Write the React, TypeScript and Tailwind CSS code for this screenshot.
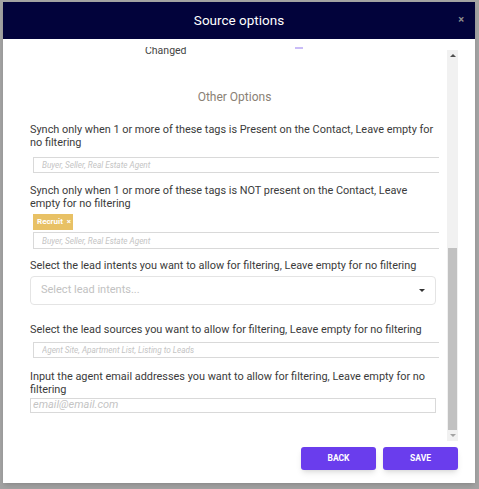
import { useState } from 'react'

const labelCls = 'text-[10.9px] leading-[13px] text-[#3b3b3b]'
const smallInput =
  'block w-[407px] ml-[3px] border border-[#d9d9d9] bg-white px-[8px] text-[8.2px] italic text-[#444] placeholder:text-[#c4c4c4] outline-none'

function Scrollbar() {
  return (
    <div className="mt-[11px] mb-[2px] ml-[8px] flex w-[11px] flex-col bg-[#f1f1f1]">
      <div className="flex h-[11px] items-center justify-center">
        <div className="h-0 w-0 border-x-[3px] border-b-[3px] border-x-transparent border-b-[#505050]" />
      </div>
      <div className="flex-1" />
      <div className="mx-[1px] h-[182px] bg-[#c1c1c1]" />
      <div className="flex h-[11px] items-center justify-center">
        <div className="h-0 w-0 border-x-[3px] border-t-[3px] border-x-transparent border-t-[#a3a3a3]" />
      </div>
    </div>
  )
}

export default function App() {
  const [tags, setTags] = useState(['Recruit'])

  return (
    <div
      className="h-[489px] w-[479px] bg-[#a3a3a3] pt-[2px] pl-[3px] pr-[4px] pb-[6px]"
      style={{ fontFamily: 'Roboto, "Liberation Sans", sans-serif' }}
    >
      <div className="flex h-full flex-col bg-white shadow-md">
        {/* header */}
        <div className="relative flex h-[37px] shrink-0 items-center justify-center bg-[#02033b]">
          <h2 className="text-[13.5px] text-white">Source options</h2>
          <button className="absolute right-[11px] top-[12px] text-[11px] font-bold leading-none text-[#8d8d8d]">
            ×
          </button>
        </div>

        {/* body */}
        <div className="flex h-[404px] shrink-0 pl-[27px] pr-[17px]">
          <div className="mt-[8px] w-[410px] overflow-hidden">
            <div className="-mt-[3px]">
              <div className="flex h-[14px] items-center">
                <span className="ml-[115px] text-[10.5px] text-[#444]">Changed</span>
                <span className="ml-[108px] mt-[-6px] h-[2px] w-[8px] bg-[#c9bcf7]" />
              </div>

              <h3 className="mt-[31px] text-center text-[12px] leading-[16px] text-[#8a8175]">
                Other Options
              </h3>

              <p className={`${labelCls} mt-[18px]`}>
                Synch only when 1 or more of these tags is Present on the Contact, Leave empty for no
                filtering
              </p>
              <input className={`${smallInput} mt-[8px] h-[16px]`} placeholder="Buyer, Seller, Real Estate Agent" />

              <p className={`${labelCls} mt-[11px]`}>
                Synch only when 1 or more of these tags is NOT present on the Contact, Leave empty for no
                filtering
              </p>
              <div className="mt-[4px] ml-[3px] flex gap-1">
                {tags.map((t) => (
                  <span
                    key={t}
                    className="flex h-[16px] w-[40px] items-center gap-[4px] bg-[#e8c165] px-[4px] text-[8px] font-bold text-white"
                  >
                    {t}
                    <button className="leading-none" onClick={() => setTags(tags.filter((x) => x !== t))}>
                      ×
                    </button>
                  </span>
                ))}
              </div>
              <input className={`${smallInput} mt-[2px] h-[17px]`} placeholder="Buyer, Seller, Real Estate Agent" />

              <p className={`${labelCls} mt-[10px]`}>
                Select the lead intents you want to allow for filtering, Leave empty for no filtering
              </p>
              <div className="mt-[4px] flex h-[29px] w-[406px] items-center justify-between rounded-[4px] border border-[#e4e4e4] pl-[10px] pr-[10px]">
                <span className="text-[11px] text-[#c2c2c2]">Select lead intents...</span>
                <div className="h-0 w-0 border-x-[3px] border-t-[3.5px] border-x-transparent border-t-[#333]" />
              </div>

              <p className={`${labelCls} mt-[18px]`}>
                Select the lead sources you want to allow for filtering, Leave empty for no filtering
              </p>
              <input
                className={`${smallInput} mt-[6px] h-[16px]`}
                placeholder="Agent Site, Apartment List, Listing to Leads"
              />

              <p className={`${labelCls} mt-[12px]`}>
                Input the agent email addresses you want to allow for filtering, Leave empty for no filtering
              </p>
              <input
                className="mt-[2px] block h-[15px] w-[406px] border border-[#d9d9d9] px-[2px] text-[11px] italic text-[#444] placeholder:text-[#c4c4c4] outline-none"
                placeholder="email@email.com"
              />
            </div>
          </div>
          <Scrollbar />
        </div>

        {/* footer */}
        <div className="mt-[4px] flex justify-end gap-[7px] pr-[17px]">
          <button className="h-[23px] w-[75px] rounded-[3px] bg-[#6a3ded] text-[8.5px] font-bold text-white shadow-md">
            BACK
          </button>
          <button className="h-[23px] w-[75px] rounded-[3px] bg-[#6a3ded] text-[8.5px] font-bold text-white shadow-md">
            SAVE
          </button>
        </div>
      </div>
    </div>
  )
}
